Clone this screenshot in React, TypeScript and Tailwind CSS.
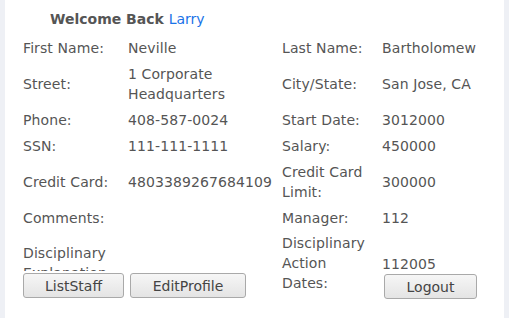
const rows: { l1: string; v1: string; l2: string; v2: string; two?: boolean }[] = [
  { l1: 'First Name:', v1: 'Neville', l2: 'Last Name:', v2: 'Bartholomew' },
  { l1: 'Street:', v1: '1 Corporate Headquarters', l2: 'City/State:', v2: 'San Jose, CA', two: true },
  { l1: 'Phone:', v1: '408-587-0024', l2: 'Start Date:', v2: '3012000' },
  { l1: 'SSN:', v1: '111-111-1111', l2: 'Salary:', v2: '450000' },
  { l1: 'Credit Card:', v1: '4803389267684109', l2: 'Credit Card Limit:', v2: '300000', two: true },
  { l1: 'Comments:', v1: '', l2: 'Manager:', v2: '112' },
];

function Btn({ label, w }: { label: string; w: string }) {
  return (
    <button
      className={`${w} h-[25px] rounded-[3px] border border-[#a9a9a9] bg-gradient-to-b from-[#f6f6f6] to-[#e4e4e4] text-[14px] leading-none text-[#444]`}
    >
      {label}
    </button>
  );
}

export default function App() {
  return (
    <div className="w-[509px] h-[318px] bg-[#eef0f5] px-[5px] font-['DejaVu_Sans',sans-serif] text-[14px] leading-[20px] text-[#555]">
      <div className="h-full bg-white pl-[18px]">
        <div className="pt-[9px] pl-[27px] h-[35px]">
          <span className="font-bold">Welcome Back </span>
          <span className="text-[#1a73e8]">Larry</span>
        </div>

        <div className="grid grid-cols-[105px_154px_100px_1fr] tracking-[0.1px]">
          {rows.map((r) => (
            <div key={r.l1} className="contents">
              <div className={`flex items-center ${r.two ? 'h-[46px]' : 'h-[26px]'}`}>{r.l1}</div>
              <div className="flex items-center">{r.v1}</div>
              <div className="flex items-center pr-2">{r.l2}</div>
              <div className="flex items-center">{r.v2}</div>
            </div>
          ))}

          {/* last row: left label is clipped by the buttons */}
          <div className="h-[40px] overflow-hidden pt-[12px]">
            Disciplinary
            <br />
            Explanation:
          </div>
          <div />
          <div className="h-[42px] pt-[2px]">
            Disciplinary
            <br />
            Action
            <br />
            Dates:
          </div>
          <div className="h-[42px] pt-[23px]">112005</div>
        </div>

        <div className="flex items-start">
          <div className="flex gap-[6px] w-[361px]">
            <Btn label="ListStaff" w="w-[101px]" />
            <Btn label="EditProfile" w="w-[116px]" />
          </div>
          <div className="mt-px">
            <Btn label="Logout" w="w-[93px]" />
          </div>
        </div>
      </div>
    </div>
  );
}
